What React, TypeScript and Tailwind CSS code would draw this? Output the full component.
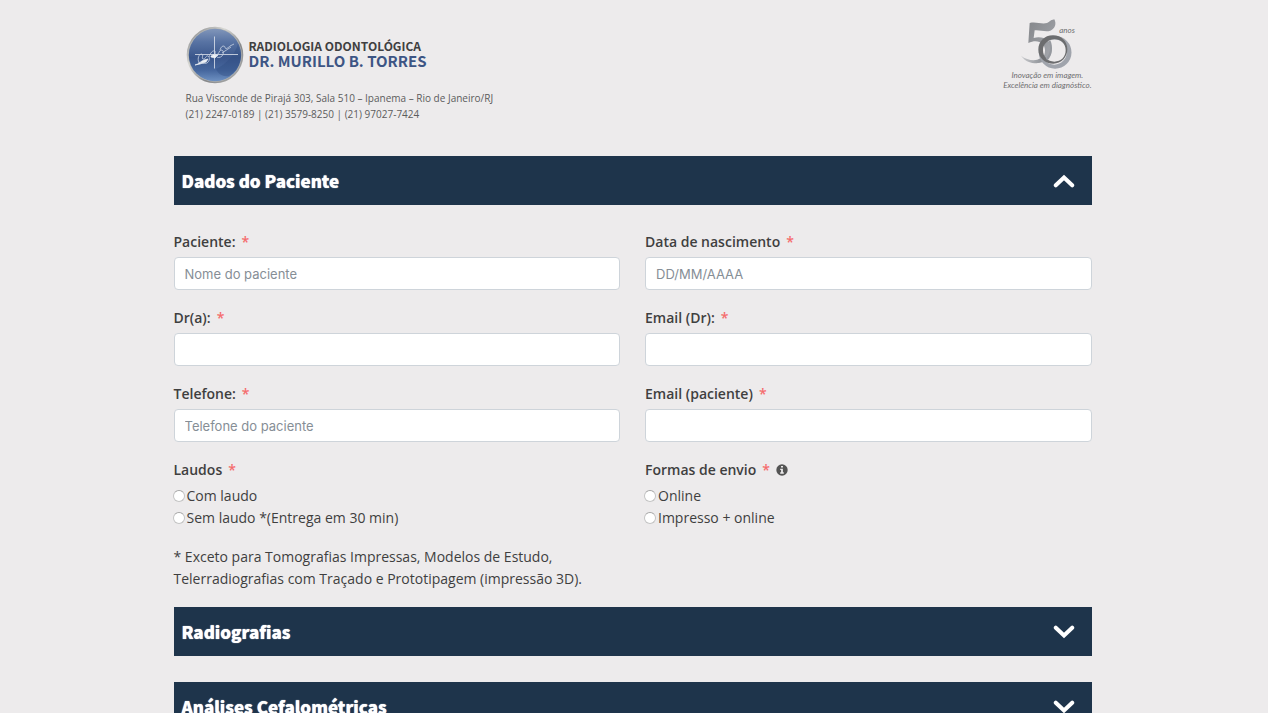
import React, { useState } from 'react';

interface SectionBarProps {
  title: string;
  open: boolean;
  onToggle: () => void;
}

const SectionBar: React.FC<SectionBarProps> = ({ title, open, onToggle }) => (
  <h2>
    <button
      type="button"
      aria-expanded={open}
      onClick={onToggle}
      className="flex h-[49px] w-full items-center justify-between bg-[#1e344b] pr-[17px] pl-2 text-left text-white"
    >
      <span className="font-['Noto_Sans_CJK_SC','Open_Sans',sans-serif] text-[17px] leading-6 font-black [text-shadow:0_0_1px_#fff]">
        {title}
      </span>
      <svg viewBox="0 0 22 14" className={open ? 'h-[14px] w-[22px]' : 'h-[14px] w-[22px] rotate-180'} aria-hidden="true">
        <path d="M2.8 11.3 11 3.5 19.2 11.3" fill="none" stroke="currentColor" strokeWidth="4" strokeLinecap="round" />
      </svg>
    </button>
  </h2>
);

const Required = () => <span className="ml-[6px] text-[#f56c6c]">*</span>;

interface TextFieldProps {
  id: string;
  label: string;
  placeholder?: string;
  type?: string;
}

const TextField: React.FC<TextFieldProps> = ({ id, label, placeholder, type = 'text' }) => (
  <div>
    <label htmlFor={id} className="mb-[5px] block text-sm leading-[21px] font-semibold">
      {label}
      <Required />
    </label>
    <input
      id={id}
      type={type}
      placeholder={placeholder}
      required
      className="block h-[33px] w-full rounded-[4px] border border-[#ced4da] bg-white px-[10px] font-[Inter,sans-serif] text-[13px] text-[#495057] outline-none placeholder:text-[#868e96] focus:border-[#80bdff]"
    />
  </div>
);

interface RadioGroupProps {
  name: string;
  label: string;
  options: string[];
  info?: boolean;
}

const RadioGroup: React.FC<RadioGroupProps> = ({ name, label, options, info }) => (
  <fieldset>
    <legend className="mb-[5px] flex items-center text-sm leading-[21px] font-semibold">
      {label}
      <Required />
      {info && (
        <svg viewBox="0 0 12 12" className="ml-[6px] h-3 w-3" aria-hidden="true">
          <circle cx="6" cy="6" r="5.7" fill="#545454" />
          <path d="M5 2h2v1.6H5zM4.2 4.7h2.7v3.6h.9v1.4H4.2V8.3h.9V6.1h-.9z" fill="#edebec" />
        </svg>
      )}
    </legend>
    {options.map(option => (
      <label key={option} className="flex items-center gap-[2px] text-sm leading-[22px]">
        <input
          type="radio"
          name={name}
          value={option}
          className="-ml-px h-3 w-3 shrink-0 appearance-none rounded-full border border-[#c4c4c4] border-t-[#a6a6a6] bg-white checked:border-4 checked:border-[#1e344b]"
        />
        {option}
      </label>
    ))}
  </fieldset>
);

const ClinicLogo = () => (
  <svg viewBox="0 0 58 58" className="h-[58px] w-[58px] shrink-0" aria-hidden="true">
    <defs>
      <linearGradient id="rim" x1="0" y1="0" x2="1" y2="1">
        <stop offset="0" stopColor="#74767a" />
        <stop offset="0.35" stopColor="#d8d8d4" />
        <stop offset="0.65" stopColor="#85878a" />
        <stop offset="1" stopColor="#b9b9b7" />
      </linearGradient>
      <linearGradient id="disc" x1="0" y1="0" x2="0" y2="1">
        <stop offset="0" stopColor="#8196ba" />
        <stop offset="0.25" stopColor="#5873a3" />
        <stop offset="0.55" stopColor="#3a568b" />
        <stop offset="0.8" stopColor="#47689f" />
        <stop offset="1" stopColor="#6e91c2" />
      </linearGradient>
    </defs>
    <circle cx="29" cy="29" r="28.3" fill="url(#rim)" />
    <circle cx="29" cy="29" r="26.8" fill="#b4b5b4" />
    <circle cx="29" cy="29" r="26.2" fill="url(#disc)" />
    <path d="M30 43C39 39 49 29 52 18c5 13 2 25-9 32-6 1-11-2-13-7z" fill="#304d82" opacity="0.4" />
    <path d="M9 28.5h43M28.5 10.5v32" stroke="#dfe5ee" strokeWidth="0.8" />
    <path
      d="M9 39c4-1 6-4 9-5l4-1-2 3-6 2zM25 30l4-2 3 1-3 3-4-1z"
      fill="#edf0f5"
      stroke="#edf0f5"
      strokeWidth="0.7"
    />
    <path
      d="M13 37c-2-5 0-9 3-9 2 1-1 4 1 5s3-4 5-3 2 5-1 7c-3 1-7 0-8-1M23 31c1-4 4-7 6-6 1 2-2 4 1 4s3-5 5-5c3 0 3 4 1 6s-5 2-6 0M34 24c1-4 4-5 5-3 0 3 3 1 5-1l4-2M36 27l9-6"
      fill="none"
      stroke="#c8d2e2"
      strokeWidth="0.8"
    />
  </svg>
);

const AnniversaryLogo = () => (
  <svg viewBox="80 28 153 150" className="h-[50px] w-[51px] shrink-0" aria-hidden="true">
    <defs>
      <linearGradient id="silver" x1="0" y1="0" x2="1" y2="1">
        <stop offset="0" stopColor="#84868a" />
        <stop offset="1" stopColor="#a9acb2" />
      </linearGradient>
      <linearGradient id="tail" x1="0" y1="0" x2="1" y2="0">
        <stop offset="0" stopColor="#c9cacd" />
        <stop offset="1" stopColor="#8d9096" />
      </linearGradient>
    </defs>
    <path
      d="M106 40c20-5 36 5 52 0 9-3 8-8 22-11 7 13 3 28-12 34-15 5-32-3-47-1l-3 23c28-8 54 7 54 36-1 25-22 39-44 39 15-10 24-21 24-38 0-24-24-35-50-22z"
      fill="url(#silver)"
    />
    <path d="M80 138c18 14 43 18 58 8l8 7c-13 9-28 10-40 5-11-4-20-11-26-20z" fill="url(#tail)" />
    <path
      fillRule="evenodd"
      d="M183 79a48 48 0 1 1-1 98 48 48 0 0 1 1-98zm-4 10a38 38 0 1 0 1 76 38 38 0 0 0-1-76z"
      fill="#a0a4ac"
    />
    <path
      fillRule="evenodd"
      d="M176 77c25 0 43 18 43 42s-18 43-42 43-45-18-45-42 18-43 44-43zm5 12c-20 0-35 14-35 33s14 34 34 34 34-14 34-34-13-33-33-33z"
      fill="#6c6d6f"
    />
    <path d="M162 94c10 16 5 41-8 53l6 5c14-14 17-40 8-60z" fill="#96999f" />
  </svg>
);

const Header = () => (
  <header className="flex justify-between pt-[19px] pl-[12px]">
    <div className="pt-[7px]">
      <div className="flex items-center gap-[5px]">
        <ClinicLogo />
        <div className="pb-1 font-['Noto_Sans_CJK_SC','Open_Sans',sans-serif] font-bold whitespace-nowrap">
          <p className="text-[12px] leading-[15px] text-[#3f3f41]">RADIOLOGIA ODONTOLÓGICA</p>
          <p className="text-[15px] leading-[15px] text-[#3d5584]">DR. MURILLO B. TORRES</p>
        </div>
      </div>
      <address className="mt-[6px] text-[10px] leading-4 text-[#5c5c5c] not-italic">
        Rua Visconde de Pirajá 303, Sala 510 – Ipanema – Rio de Janeiro/RJ
        <br />
        (21) 2247-0189 | (21) 3579-8250 | (21) 97027-7424
      </address>
    </div>
    <div className="font-[Lato,sans-serif] text-[8px] leading-[10px] text-[#6d6e70] italic">
      <div className="flex pl-[18px]">
        <AnniversaryLogo />
        <span className="-ml-[13px] pt-[6px]">anos</span>
      </div>
      <p className="pt-px text-center">
        Inovação em imagem.
        <br />
        Excelência em diagnóstico.
      </p>
    </div>
  </header>
);

export default function App() {
  const [open, setOpen] = useState<string | null>('paciente');
  const toggle = (key: string) => setOpen(open === key ? null : key);

  return (
    <div className="h-screen overflow-hidden bg-[#edebec] pr-[3px] font-['Open_Sans',sans-serif] text-[#3f3f3f]">
      <main className="mx-auto max-w-[918px]">
        <Header />

        <form className="mt-[34px]" onSubmit={e => e.preventDefault()}>
          <SectionBar title="Dados do Paciente" open={open === 'paciente'} onToggle={() => toggle('paciente')} />
          {open === 'paciente' && (
            <div className="grid grid-cols-2 gap-x-[25px] gap-y-[17px] pt-[26px] pb-[17px]">
              <TextField id="paciente" label="Paciente:" placeholder="Nome do paciente" />
              <TextField id="nascimento" label="Data de nascimento" placeholder="DD/MM/AAAA" />
              <TextField id="doutor" label="Dr(a):" />
              <TextField id="email-doutor" label="Email (Dr):" type="email" />
              <TextField id="telefone" label="Telefone:" placeholder="Telefone do paciente" type="tel" />
              <TextField id="email-paciente" label="Email (paciente)" type="email" />
              <div>
                <RadioGroup name="laudos" label="Laudos" options={['Com laudo', 'Sem laudo *(Entrega em 30 min)']} />
                <p className="mt-[17px] text-sm leading-[22px]">
                  * Exceto para Tomografias Impressas, Modelos de Estudo, Telerradiografias com Traçado e Prototipagem
                  (impressão 3D).
                </p>
              </div>
              <RadioGroup name="envio" label="Formas de envio" options={['Online', 'Impresso + online']} info />
            </div>
          )}

          <div className="flex flex-col gap-[26px]">
            <SectionBar title="Radiografias" open={open === 'radiografias'} onToggle={() => toggle('radiografias')} />
            <SectionBar title="Análises Cefalométricas" open={open === 'analises'} onToggle={() => toggle('analises')} />
          </div>
        </form>
      </main>
    </div>
  );
}
